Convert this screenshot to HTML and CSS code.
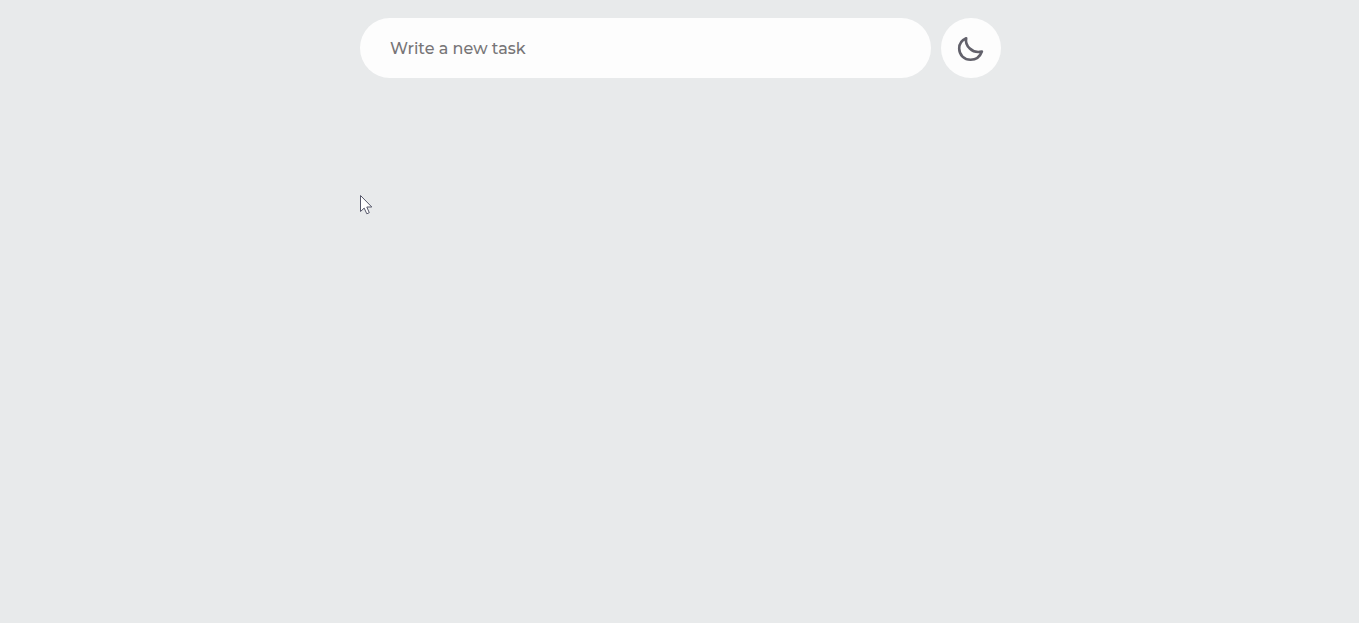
FILE: index.html
```html
<!DOCTYPE html>
<html lang="en">
<head>
<meta charset="utf-8">
<title>Tasks</title>
<link rel="stylesheet" href="styles.css">
</head>
<body>
<main class="toolbar">
  <input class="task-input" type="text" placeholder="Write a new task" aria-label="Write a new task">
  <button class="theme-toggle" type="button" aria-label="Toggle dark mode">
    <svg class="moon" viewBox="0 0 28 28"><path d="M9.2 4.2C4.8 6 2.2 9.7 2.2 14.5C2.2 21 7.2 25.8 13.6 25.8C19 25.8 23 22.6 24.9 17.5C20.4 18.6 16 17.6 12.8 14.5C9.8 11.7 8.4 8 9.2 4.2Z"/></svg>
  </button>
</main>
<svg class="cursor" viewBox="0 0 13 20"><path d="M.5.5V16.5L4.2 13.1L6.8 18.8L9.3 17.7L6.8 12H11.8Z"/></svg>
</body>
</html>
```
FILE: styles.css
```css
body {
  margin: 0;
  min-height: 100vh;
  background: #e8eaeb;
}

.toolbar {
  display: flex;
  gap: 10px;
  width: 641px;
  margin-left: 360px;
  padding-top: 18px;
}

.task-input {
  box-sizing: border-box;
  flex: 1;
  min-width: 0;
  height: 60px;
  padding: 0 30px;
  border: 0;
  border-radius: 30px;
  outline: 0;
  background: #fdfdfd;
  font: 500 16px Montserrat, Inter, sans-serif;
}

.task-input::placeholder {
  color: #777577;
  opacity: 1;
}

.theme-toggle {
  display: flex;
  align-items: center;
  justify-content: center;
  width: 60px;
  height: 60px;
  padding: 0;
  border: 0;
  border-radius: 50%;
  background: #fdfdfd;
}

.moon {
  width: 28px;
  height: 28px;
  fill: none;
  stroke: #62616b;
  stroke-width: 2.6;
  stroke-linejoin: round;
}

.cursor {
  position: absolute;
  top: 195px;
  left: 360px;
  width: 13px;
  height: 20px;
  fill: #fff;
  stroke: #56586a;
  stroke-width: 1;
}
```
